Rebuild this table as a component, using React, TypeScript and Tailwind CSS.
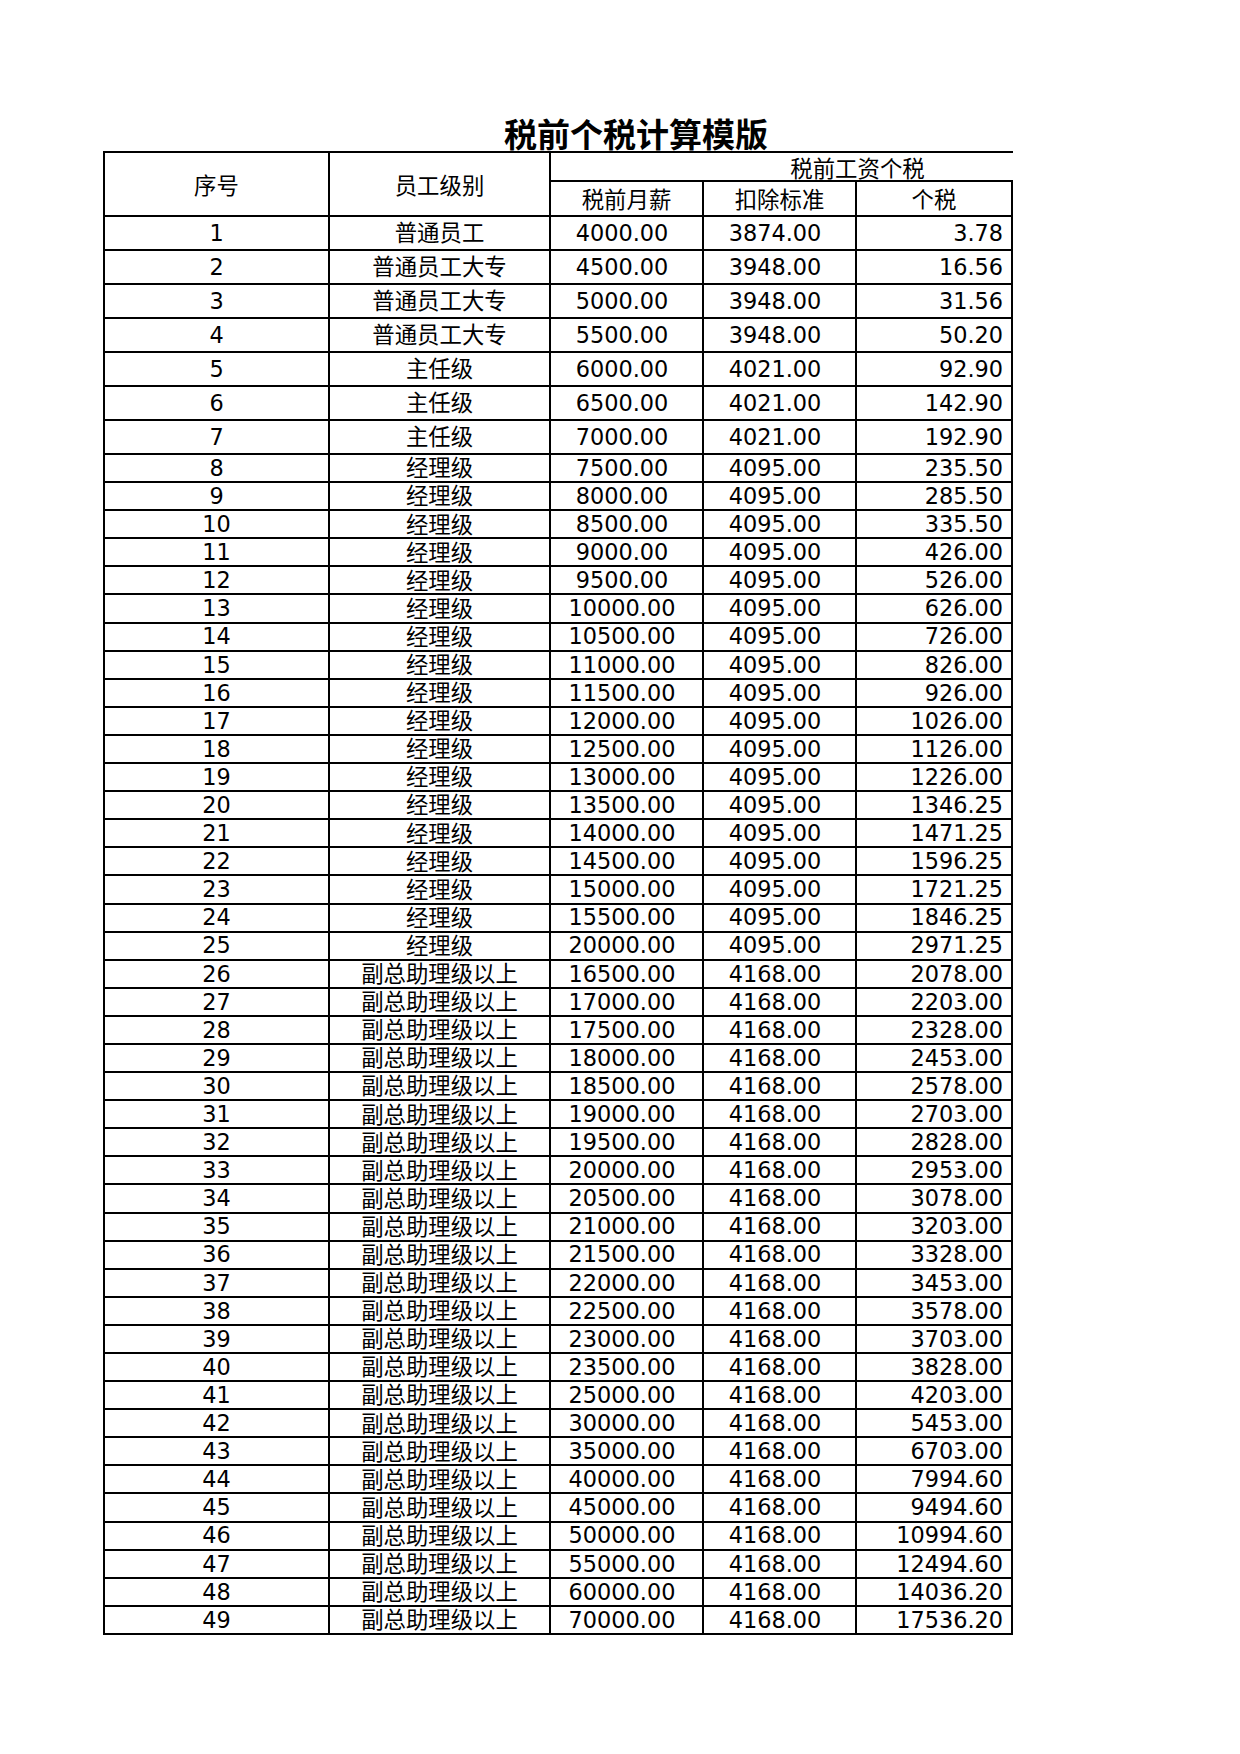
import React from 'react';

type Row = [string, string, string, string];

const rows: Row[] = [
  ['普通员工', '4000.00', '3874.00', '3.78'],
  ['普通员工大专', '4500.00', '3948.00', '16.56'],
  ['普通员工大专', '5000.00', '3948.00', '31.56'],
  ['普通员工大专', '5500.00', '3948.00', '50.20'],
  ['主任级', '6000.00', '4021.00', '92.90'],
  ['主任级', '6500.00', '4021.00', '142.90'],
  ['主任级', '7000.00', '4021.00', '192.90'],
  ['经理级', '7500.00', '4095.00', '235.50'],
  ['经理级', '8000.00', '4095.00', '285.50'],
  ['经理级', '8500.00', '4095.00', '335.50'],
  ['经理级', '9000.00', '4095.00', '426.00'],
  ['经理级', '9500.00', '4095.00', '526.00'],
  ['经理级', '10000.00', '4095.00', '626.00'],
  ['经理级', '10500.00', '4095.00', '726.00'],
  ['经理级', '11000.00', '4095.00', '826.00'],
  ['经理级', '11500.00', '4095.00', '926.00'],
  ['经理级', '12000.00', '4095.00', '1026.00'],
  ['经理级', '12500.00', '4095.00', '1126.00'],
  ['经理级', '13000.00', '4095.00', '1226.00'],
  ['经理级', '13500.00', '4095.00', '1346.25'],
  ['经理级', '14000.00', '4095.00', '1471.25'],
  ['经理级', '14500.00', '4095.00', '1596.25'],
  ['经理级', '15000.00', '4095.00', '1721.25'],
  ['经理级', '15500.00', '4095.00', '1846.25'],
  ['经理级', '20000.00', '4095.00', '2971.25'],
  ['副总助理级以上', '16500.00', '4168.00', '2078.00'],
  ['副总助理级以上', '17000.00', '4168.00', '2203.00'],
  ['副总助理级以上', '17500.00', '4168.00', '2328.00'],
  ['副总助理级以上', '18000.00', '4168.00', '2453.00'],
  ['副总助理级以上', '18500.00', '4168.00', '2578.00'],
  ['副总助理级以上', '19000.00', '4168.00', '2703.00'],
  ['副总助理级以上', '19500.00', '4168.00', '2828.00'],
  ['副总助理级以上', '20000.00', '4168.00', '2953.00'],
  ['副总助理级以上', '20500.00', '4168.00', '3078.00'],
  ['副总助理级以上', '21000.00', '4168.00', '3203.00'],
  ['副总助理级以上', '21500.00', '4168.00', '3328.00'],
  ['副总助理级以上', '22000.00', '4168.00', '3453.00'],
  ['副总助理级以上', '22500.00', '4168.00', '3578.00'],
  ['副总助理级以上', '23000.00', '4168.00', '3703.00'],
  ['副总助理级以上', '23500.00', '4168.00', '3828.00'],
  ['副总助理级以上', '25000.00', '4168.00', '4203.00'],
  ['副总助理级以上', '30000.00', '4168.00', '5453.00'],
  ['副总助理级以上', '35000.00', '4168.00', '6703.00'],
  ['副总助理级以上', '40000.00', '4168.00', '7994.60'],
  ['副总助理级以上', '45000.00', '4168.00', '9494.60'],
  ['副总助理级以上', '50000.00', '4168.00', '10994.60'],
  ['副总助理级以上', '55000.00', '4168.00', '12494.60'],
  ['副总助理级以上', '60000.00', '4168.00', '14036.20'],
  ['副总助理级以上', '70000.00', '4168.00', '17536.20'],
];

const cell = 'border-r-2 border-b-2 border-black flex items-center';

export default function App() {
  return (
    <div
      className="min-h-[1754px] w-[1240px] bg-white text-black pt-[117px] pl-[103px]"
      style={{ fontFamily: '"DejaVu Sans", "Noto Sans CJK SC", sans-serif' }}
    >
      <div
        className="h-[33px] mb-[1px] pl-[401px] text-[33px] leading-[33px] font-bold"
        style={{ fontFamily: '"Noto Sans CJK SC", sans-serif' }}
      >
        税前个税计算模版
      </div>

      <div className="w-[910px] border-t-2 border-black text-[22.4px] leading-none">
        {/* header */}
        <div className="flex">
          <div className={`${cell} border-l-2 w-[227px] h-[64px] justify-center pt-[4px]`}>序号</div>
          <div className={`${cell} w-[221px] h-[64px] justify-center pt-[4px]`}>员工级别</div>
          <div className="flex flex-col w-[462px]">
            <div className="flex h-[29px] border-b-2 border-black">
              <div className="w-[153px]" />
              <div className="flex-1 flex items-center justify-center pr-[2px] pt-[5px]">税前工资个税</div>
            </div>
            <div className="flex h-[35px]">
              <div className={`${cell} w-[153px] justify-center pt-[4px]`}>税前月薪</div>
              <div className={`${cell} w-[153px] justify-center pt-[4px]`}>扣除标准</div>
              <div className={`${cell} w-[156px] justify-center pt-[4px]`}>个税</div>
            </div>
          </div>
        </div>

        {/* rows */}
        {rows.map((r, i) => {
          const h = i < 7 ? 'h-[34px]' : 'h-[28.1px]';
          return (
            <div key={i} className={`flex ${h}`}>
              <div className={`${cell} border-l-2 w-[227px] justify-center`}>{i + 1}</div>
              <div className={`${cell} w-[221px] justify-center pt-[1px]`}>{r[0]}</div>
              <div className={`${cell} w-[153px] justify-center pr-[9px]`}>{r[1]}</div>
              <div className={`${cell} w-[153px] justify-center pr-[9px]`}>{r[2]}</div>
              <div className={`${cell} w-[156px] justify-end pr-[8px]`}>{r[3]}</div>
            </div>
          );
        })}
      </div>
    </div>
  );
}
